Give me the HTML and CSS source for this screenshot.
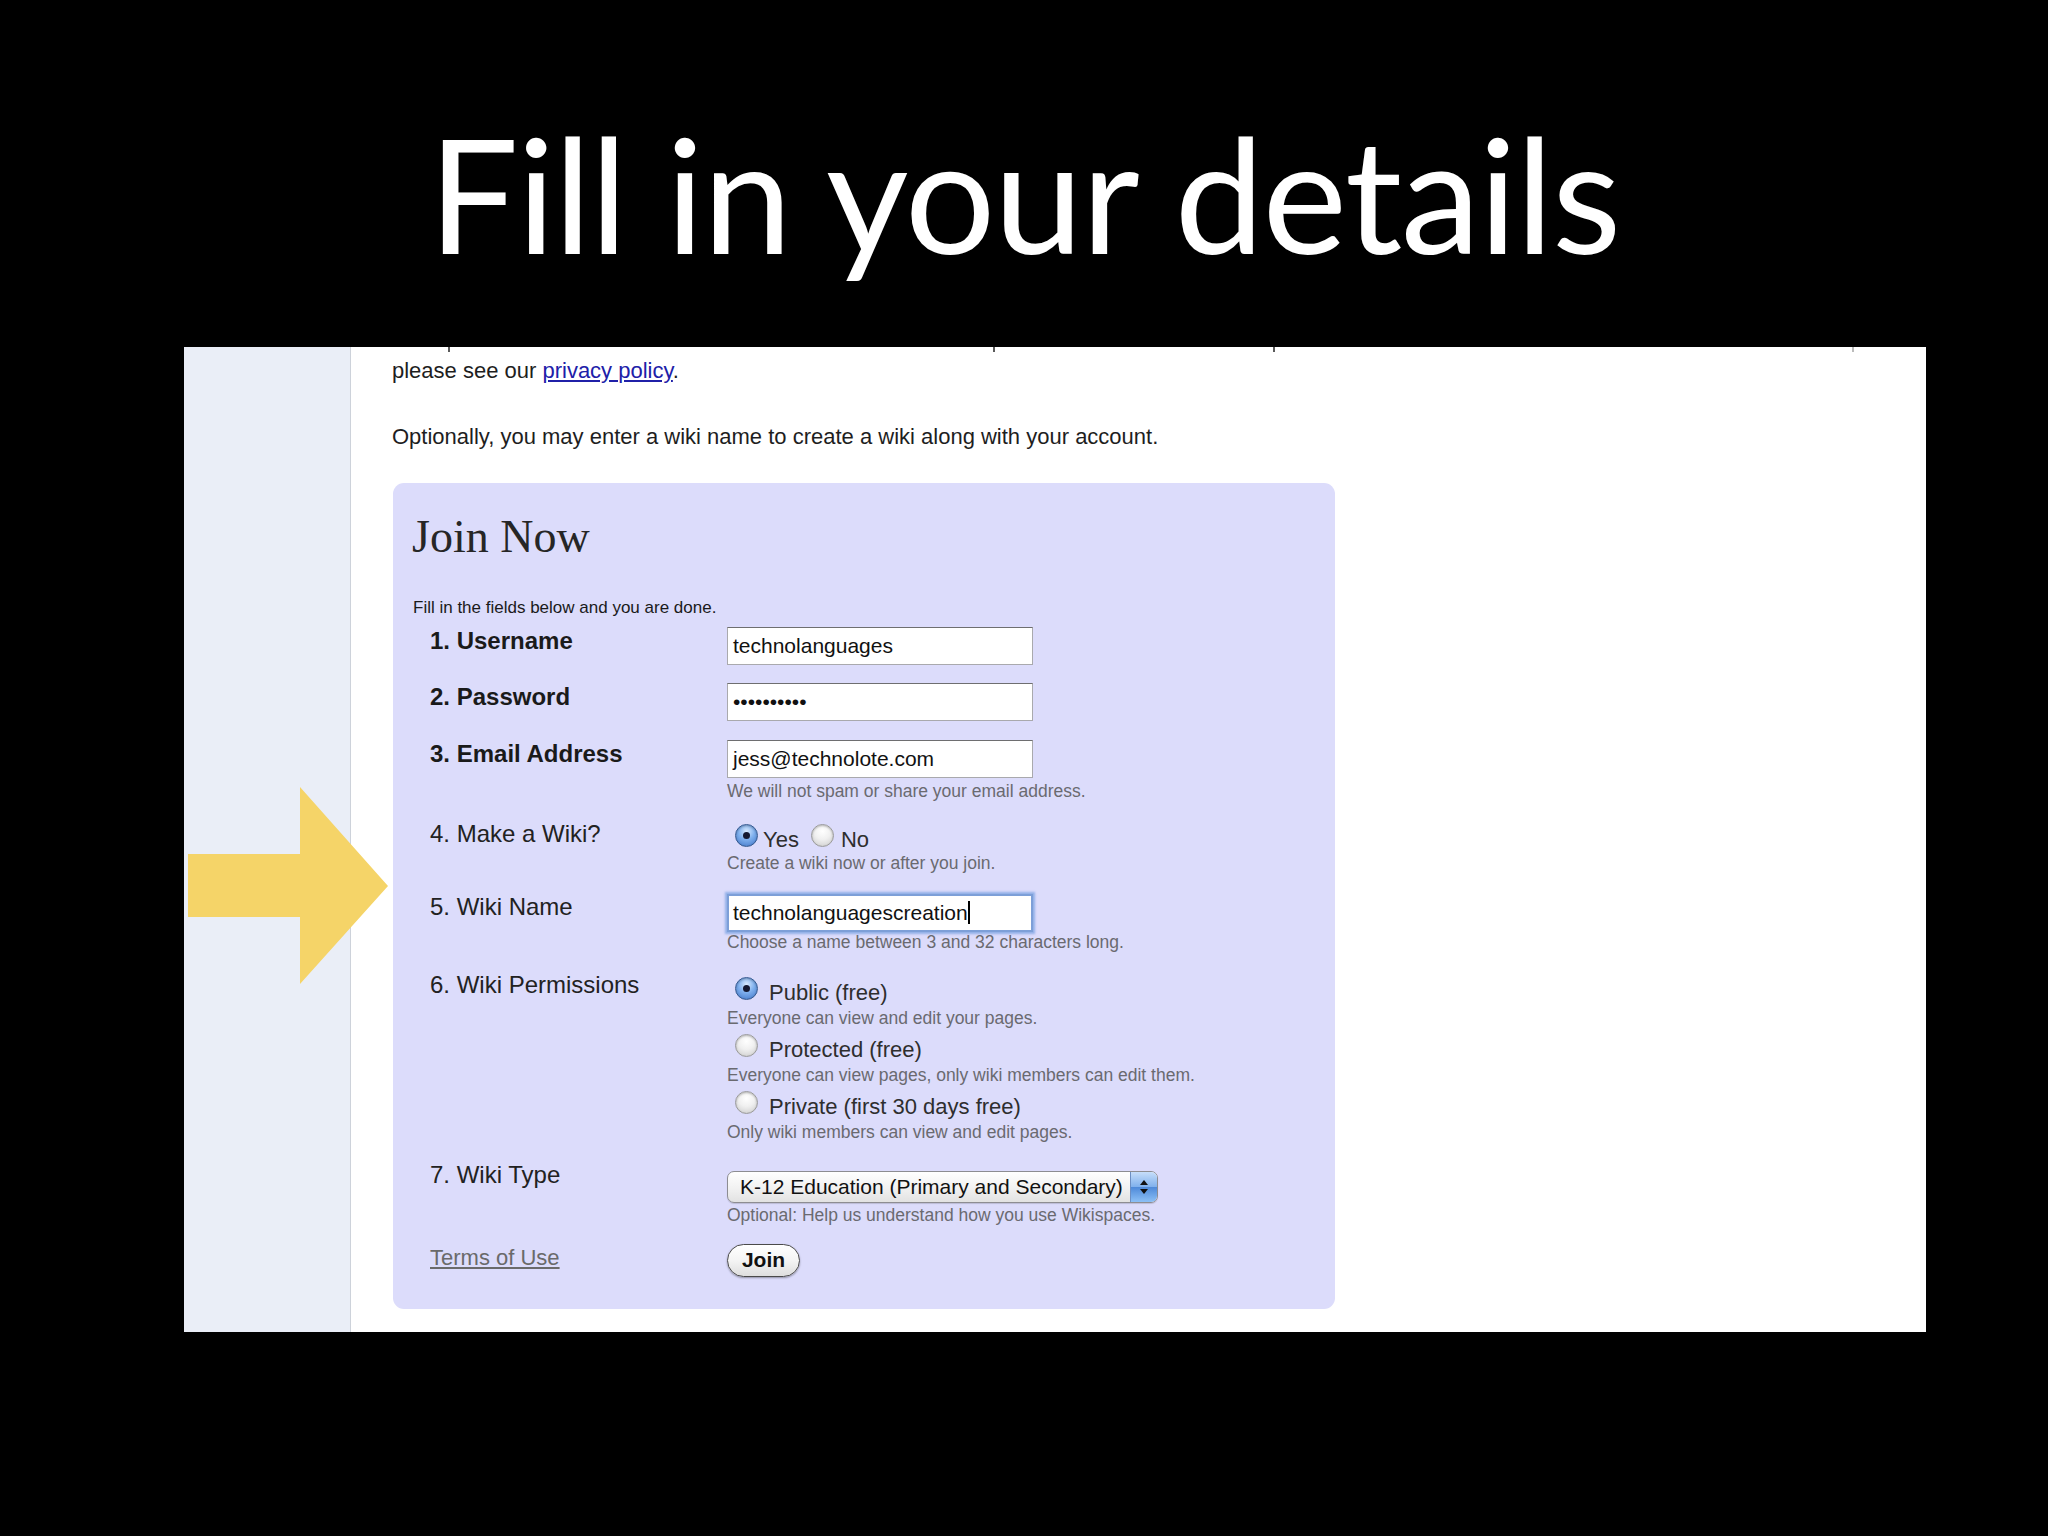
FILE: index.html
```html
<!DOCTYPE html>
<html lang="en">
<head>
<meta charset="utf-8">
<title>Fill in your details</title>
<link rel="stylesheet" href="styles.css">
</head>
<body>
<div class="slide">
  <h1 class="title">Fill in your details</h1>
  <div class="shot">
    <aside class="side"></aside>
    <main class="content">
      <div class="clipline"><span class="tick t1"></span><span class="tick t2"></span><span class="tick t3"></span><span class="tick t4"></span></div>
      <p class="intro first">please see our <a href="#" class="plink">privacy policy</a>.</p>
      <p class="intro opt">Optionally, you may enter a wiki name to create a wiki along with your account.</p>
      <section class="join">
        <h2 class="join-title">Join Now</h2>
        <p class="lead">Fill in the fields below and you are done.</p>

        <div class="row r1">
          <div class="label strong">1. Username</div>
          <div class="field"><div class="input">technolanguages</div></div>
        </div>
        <div class="row r2">
          <div class="label strong">2. Password</div>
          <div class="field"><div class="input dots">••••••••••</div></div>
        </div>
        <div class="row r3">
          <div class="label strong">3. Email Address</div>
          <div class="field">
            <div class="input">jess@technolote.com</div>
            <div class="help h-after-input">We will not spam or share your email address.</div>
          </div>
        </div>
        <div class="row r4">
          <div class="label">4. Make a Wiki?</div>
          <div class="field f4">
            <div class="optline"><span class="radio on yes-r"></span><span class="yes-t">Yes</span><span class="radio no-r"></span><span class="no-t">No</span></div>
            <div class="help">Create a wiki now or after you join.</div>
          </div>
        </div>
        <div class="row r5">
          <div class="label">5. Wiki Name</div>
          <div class="field f5">
            <div class="input focus">technolanguagescreation<span class="caret"></span></div>
            <div class="help">Choose a name between 3 and 32 characters long.</div>
          </div>
        </div>
        <div class="row r6">
          <div class="label">6. Wiki Permissions</div>
          <div class="field f6">
            <div class="optline"><span class="radio on perm"></span><span class="perm-t">Public (free)</span></div>
            <div class="help h-opt">Everyone can view and edit your pages.</div>
            <div class="optline next"><span class="radio perm"></span><span class="perm-t">Protected (free)</span></div>
            <div class="help h-opt">Everyone can view pages, only wiki members can edit them.</div>
            <div class="optline next"><span class="radio perm"></span><span class="perm-t">Private (first 30 days free)</span></div>
            <div class="help h-opt">Only wiki members can view and edit pages.</div>
          </div>
        </div>
        <div class="row r7">
          <div class="label">7. Wiki Type</div>
          <div class="field f7">
            <div class="select">
              <span class="select-text">K-12 Education (Primary and Secondary)</span>
              <span class="select-btn">
                <svg width="10" height="16" viewBox="0 0 10 16"><path d="M5 1 L9 6 H1 Z" fill="#111"/><path d="M5 15 L9 10 H1 Z" fill="#111"/></svg>
              </span>
            </div>
            <div class="help h-select">Optional: Help us understand how you use Wikispaces.</div>
          </div>
        </div>
        <div class="row r8">
          <div class="label"><a href="#" class="terms">Terms of Use</a></div>
          <div class="field f8"><span class="btn">Join</span></div>
        </div>
      </section>
    </main>
    <svg class="arrow" width="210" height="200" viewBox="0 0 210 200">
      <polygon points="4,67 116,67 116,0 204,99 116,197 116,130 4,130" fill="#f5d468"/>
    </svg>
  </div>
</div>
</body>
</html>
```

FILE: styles.css
```css
html, body {
  margin: 0;
  padding: 0;
  background: #000;
}
.slide {
  width: 2048px;
  height: 1536px;
  background: #000;
  overflow: hidden;
}
.title {
  margin: 0;
  padding-top: 92px;
  height: 255px;
  box-sizing: border-box;
  font-family: Lato, "Open Sans", sans-serif;
  font-weight: 400;
  font-size: 160px;
  line-height: 200px;
  letter-spacing: -1.5px;
  color: #fff;
  text-align: center;
}
.shot {
  position: relative;
  margin-top: 92px;
  margin-left: 184px;
  width: 1742px;
  height: 985px;
  background: #fff;
  display: flex;
  overflow: hidden;
  font-family: "Liberation Sans", Arial, sans-serif;
  color: #1e1e1e;
}
.side {
  width: 166px;
  flex: none;
  background: #eaeef7;
  border-right: 1px solid #cdd2da;
}
.content {
  flex: 1;
  padding: 0 0 0 41px;
}
.clipline {
  display: flex;
  height: 5px;
}
.tick {
  display: block;
  width: 2px;
  height: 5px;
  background: #5a5a5a;
}
.t1 { margin-left: 56px; }
.t2 { margin-left: 543px; }
.t3 { margin-left: 278px; }
.t4 { margin-left: 577px; background: #bbb; }
.intro {
  margin: 0;
  font-size: 22px;
  line-height: 24px;
  color: #1e1e1e;
}
.intro.first {
  margin-top: 7px;
}
.intro.opt {
  margin-top: 42px;
}
.plink {
  color: #2020a8;
  text-decoration: underline;
}
.join {
  margin-top: 34px;
  margin-left: 1px;
  width: 942px;
  box-sizing: border-box;
  padding: 30px 0 32px 0;
  background: #dcdcfb;
  border-radius: 11px;
}
.join-title {
  margin: 0 0 0 19px;
  font-family: "Liberation Serif", "Times New Roman", serif;
  font-weight: 400;
  font-size: 46px;
  line-height: 48px;
  color: #262626;
}
.lead {
  margin: 38px 0 0 20px;
  font-size: 17px;
  line-height: 18px;
  color: #1a1a1a;
}
.row {
  display: grid;
  grid-template-columns: 297px 1fr;
  padding-left: 37px;
  margin-top: 19px;
}
.row.r1 { margin-top: 10px; }
.row.r2 { margin-top: 18px; }
.row.r5 { margin-top: 20px; }
.row.r8 { margin-top: 18px; }
.label {
  font-size: 24px;
  line-height: 28px;
  color: #222;
}
.label.strong {
  font-weight: 700;
  color: #1a1a1a;
}
.input {
  width: 306px;
  height: 38px;
  box-sizing: border-box;
  background: #fff;
  border: 1px solid #a9a9ad;
  border-top-color: #6e6e70;
  padding: 6px 0 0 5px;
  font-size: 21px;
  line-height: 24px;
  color: #111;
  white-space: nowrap;
}
.input.focus {
  border: 2px solid #7d9fd8;
  padding: 5px 0 0 4px;
  box-shadow: 0 0 2px 2px rgba(120, 160, 225, 0.75);
}
.caret {
  display: inline-block;
  width: 2px;
  height: 23px;
  background: #000;
  vertical-align: -4px;
}
.help {
  font-size: 17.5px;
  line-height: 20px;
  color: #6a6a70;
  white-space: nowrap;
}
.h-after-input { margin-top: 3px; }
.f4 { padding-top: 4px; }
.f5 { padding-top: 1px; }
.f6 { padding-top: 6px; }
.f7 { padding-top: 10px; }
.f8 { padding-top: 1px; }
.optline {
  font-size: 22px;
  line-height: 26px;
  color: #2e2e2e;
  white-space: nowrap;
}
.optline.next { margin-top: 6px; }
.h-opt { margin-top: 2px; }
.h-select { margin-top: 2px; }
.radio {
  display: inline-block;
  position: relative;
  width: 23px;
  height: 23px;
  box-sizing: border-box;
  border-radius: 50%;
  border: 1px solid #9a9a9a;
  background: radial-gradient(circle at 50% 30%, #ffffff 0%, #f0f0f0 45%, #c9c9c9 100%);
  box-shadow: inset 0 1px 2px rgba(0,0,0,0.25);
  vertical-align: baseline;
}
.radio.on {
  border-color: #35598f;
  background: radial-gradient(circle at 50% 30%, #d8e9fd 0%, #7fb0ee 45%, #3d73c6 100%);
}
.radio.on::after {
  content: "";
  position: absolute;
  left: 7px;
  top: 7px;
  width: 7px;
  height: 7px;
  border-radius: 50%;
  background: #141830;
}
.yes-r { margin-left: 8px; margin-right: 5px; }
.no-r { margin-left: 12px; margin-right: 7px; }
.perm { margin-left: 8px; margin-right: 11px; }
.select {
  position: relative;
  width: 431px;
  height: 32px;
  box-sizing: border-box;
  border: 1px solid #8d8d92;
  border-radius: 7px;
  background: linear-gradient(#ffffff, #f1f1f1 55%, #e2e2e2);
  box-shadow: 0 1px 1px rgba(0,0,0,0.15);
  display: flex;
  align-items: center;
  overflow: hidden;
}
.select-text {
  flex: 1;
  padding-left: 12px;
  font-size: 21px;
  line-height: 24px;
  color: #111;
  white-space: nowrap;
}
.select-btn {
  width: 26px;
  height: 100%;
  flex: none;
  display: flex;
  align-items: center;
  justify-content: center;
  border-left: 1px solid #6d8fc2;
  background: linear-gradient(#c6defa, #7fb0ec 50%, #4f8ad9 51%, #8cc0f6);
}
.terms {
  font-size: 22px;
  color: #6a6a6a;
  text-decoration: underline;
}
.btn {
  display: inline-block;
  width: 73px;
  height: 33px;
  box-sizing: border-box;
  border: 1.5px solid #4a4a4a;
  border-radius: 17px;
  background: linear-gradient(#ffffff, #f4f4f4 50%, #dedede);
  box-shadow: 0 1px 2px rgba(0,0,0,0.35);
  font-size: 21px;
  font-weight: 700;
  line-height: 30px;
  text-align: center;
  color: #111;
}
.arrow {
  position: absolute;
  left: 0;
  top: 440px;
}
```
